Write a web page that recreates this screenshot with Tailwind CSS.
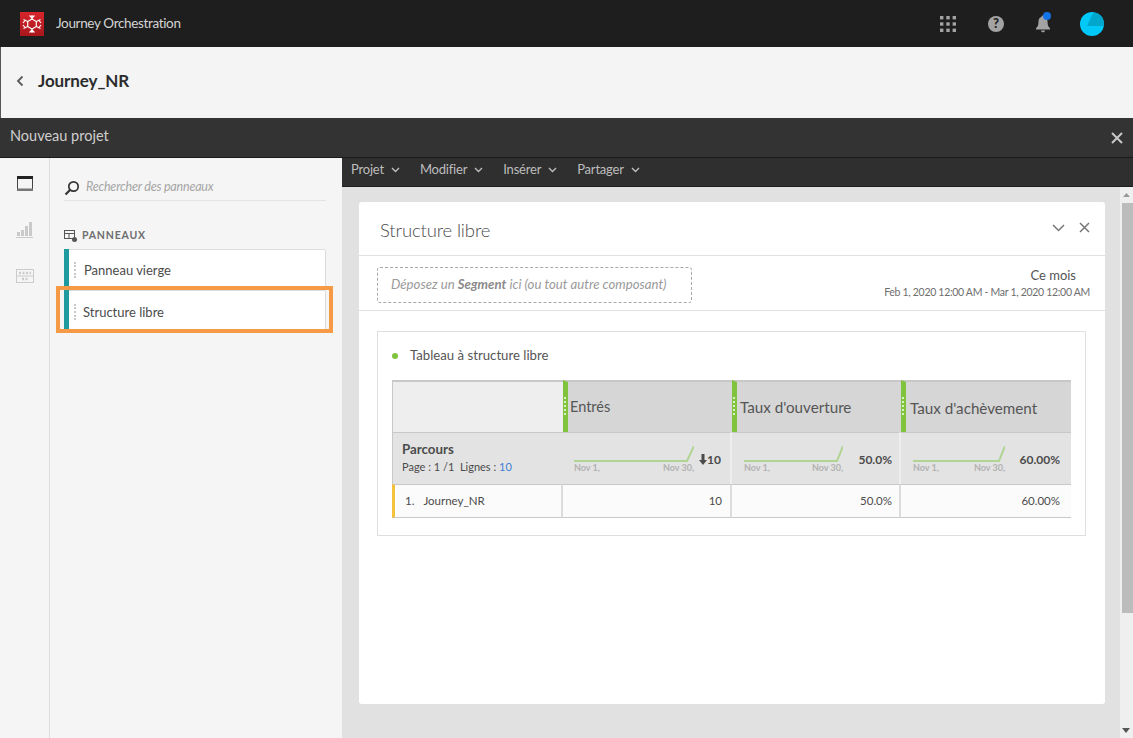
<!DOCTYPE html>
<html lang="fr"><head><meta charset="utf-8">
<script src="https://cdn.jsdelivr.net/npm/@tailwindcss/browser@4"></script>
</head>
<body class="w-[1133px] h-[738px] overflow-hidden bg-[#e1e1e1] font-['Lato','Noto_Sans',sans-serif] text-[#4b4b4b]">
<header class="h-[47px] bg-[#1e1e1e] flex items-center pl-5 pr-[29px]">
  <div class="w-6 h-6 bg-gradient-to-b from-[#d9252c] to-[#a8171d] flex items-center justify-center">
    <svg width="20" height="20" viewBox="0 0 20 20" fill="none" stroke="#fff" stroke-width="1.2"><path d="M10 5L14.3 7.5V12.5L10 15L5.7 12.5V7.5Z"/><path d="M10 1V5M10 15V19M1.5 5.5L5.7 7.5M18.5 5.5L14.3 7.5M1.5 14.5L5.7 12.5M18.5 14.5L14.3 12.5M7.5 1.5L10 4L12.5 1.5M7.5 18.5L10 16L12.5 18.5M1 9L3 6.5M19 9L17 6.5M1 11L3 13.5M19 11L17 13.5"/></svg>
  </div>
  <span class="ml-3 text-[13.5px] text-[#d4d4d4] tracking-[-0.35px]">Journey Orchestration</span>
  <div class="ml-auto flex items-center">
    <svg width="16" height="16" viewBox="0 0 16 16" fill="#a3a3a3"><rect width="3.4" height="3.4" x="0" y="0"/><rect width="3.4" height="3.4" x="6.3" y="0"/><rect width="3.4" height="3.4" x="12.6" y="0"/><rect width="3.4" height="3.4" x="0" y="6.3"/><rect width="3.4" height="3.4" x="6.3" y="6.3"/><rect width="3.4" height="3.4" x="12.6" y="6.3"/><rect width="3.4" height="3.4" x="0" y="12.6"/><rect width="3.4" height="3.4" x="6.3" y="12.6"/><rect width="3.4" height="3.4" x="12.6" y="12.6"/></svg>
    <div class="ml-[32px] w-4 h-4 rounded-full bg-[#a3a3a3] flex items-center justify-center text-[#1e1e1e] text-[13px] font-black leading-none">?</div>
    <div class="relative ml-[31px] w-4 h-5">
      <svg width="16" height="20" viewBox="0 0 16 20" fill="#a3a3a3"><path d="M8 1.5C9 1.5 9.6 2.2 9.6 3C12 3.8 12.6 6 12.6 8.5C12.6 11 13.2 12.6 15 14.3V15.5H1V14.3C2.8 12.6 3.4 11 3.4 8.5C3.4 6 4 3.8 6.4 3C6.4 2.2 7 1.5 8 1.5Z"/><path d="M6 16.5H10C10 18.9 6 18.9 6 16.5Z"/></svg>
      <span class="absolute -top-0.5 left-2 w-2 h-2 rounded-full bg-[#1473e6]"></span>
    </div>
    <div class="ml-[29px] w-6 h-6 rounded-full bg-[#00c8f8] relative overflow-hidden">
      <svg width="24" height="24" viewBox="0 0 24 24" class="absolute inset-0"><path d="M7 14L13 1H24V14Z" fill="#00a6cc"/></svg>
    </div>
  </div>
</header>
<div class="h-[71px] bg-[#f4f4f4] border-l border-l-[#555] flex items-center pl-[15px] pb-[4px]">
  <svg width="8" height="12" viewBox="0 0 8 12" fill="none" stroke="#5a5a5a" stroke-width="1.8"><path d="M6.5 1.5L2 6L6.5 10.5"/></svg>
  <span class="ml-[14px] text-[17px] font-bold text-[#2c2c2c] tracking-[-0.1px]">Journey_NR</span>
</div>
<div class="h-10 bg-[#333333] border-b border-b-[#1a1a1a] flex items-center justify-between pl-2.5 pr-[10px]">
  <span class="text-[14.5px] text-[#cfcfcf] -mt-1">Nouveau projet</span>
  <svg width="12" height="12" viewBox="0 0 12 12" fill="none" stroke="#c8c8c8" stroke-width="2"><path d="M1 1L11 11M11 1L1 11"/></svg>
</div>
<div class="flex h-[580px]">
  <nav class="w-[50px] bg-[#f5f5f5] border-r border-r-[#dedede] flex flex-col items-center shrink-0 pt-[18px]">
    <svg width="16" height="15" viewBox="0 0 16 15" fill="none"><rect x="0.5" y="0.5" width="15" height="14" stroke="#444"/><rect x="0" y="0" width="16" height="3" fill="#222"/><rect x="0" y="12.5" width="16" height="2.5" fill="#777"/></svg>
    <svg class="mt-[31px]" width="17" height="16" viewBox="0 0 17 16" fill="#c9c9c9"><rect x="1" y="10" width="3" height="4"/><rect x="5" y="8" width="3" height="6"/><rect x="9" y="4" width="3" height="10"/><rect x="13" y="0" width="3" height="14"/><rect x="0" y="15" width="17" height="1"/></svg>
    <svg class="mt-[31px]" width="18" height="14" viewBox="0 0 18 14" fill="none" stroke="#cbcbcb"><rect x="0.5" y="0.5" width="17" height="13"/><path d="M0 7H18"/><path d="M3 4H15M6 10H13" stroke-width="2.4" stroke-dasharray="2 1.5"/></svg>
  </nav>
  <aside class="w-[292px] shrink-0 bg-[#f5f5f5] pl-3.5 pr-4 pt-[3px]">
    <div class="h-10 border-b border-b-[#e4e4e4] flex items-center pt-[14px]">
      <svg width="16" height="16" viewBox="0 0 16 16" fill="none" stroke="#333" stroke-width="1.7"><circle cx="9.5" cy="6.5" r="4.7"/><path d="M6 10L1.5 14.5" stroke-width="2.2"/></svg>
      <span class="ml-1.5 italic text-[12.5px] text-[#a5a5a5] tracking-[-0.2px]">Rechercher des panneaux</span>
    </div>
    <div class="mt-[27px] h-4 flex items-center">
      <svg width="14" height="14" viewBox="0 0 14 14" fill="none" stroke="#555"><rect x="0.5" y="1.5" width="10" height="8"/><path d="M0.5 4.5H10.5M5 4.5V9.5"/><circle cx="10.5" cy="10.5" r="2.5" fill="#555" stroke="none"/></svg>
      <span class="ml-1 text-[10.5px] font-bold tracking-[0.8px] text-[#6e6e6e]">PANNEAUX</span>
    </div>
    <ul class="mt-[5px] w-[262px] relative">
      <li class="h-[42px] bg-white border border-[#dcdcdc] border-l-0 rounded-r-[2px] flex items-center">
        <span class="w-[5px] h-[42px] bg-[#1f9a9e] shrink-0 -mt-px -mb-px"></span>
        <span class="ml-[5px] h-4 border-l-2 border-dotted border-l-[#c8c8c8]"></span>
        <span class="ml-[8px] pt-[2px] text-[13px] text-[#4b4b4b]">Panneau vierge</span>
      </li>
      <li class="h-[42px] bg-white border-b border-r border-[#dcdcdc] flex items-center relative">
        <span class="w-[5px] h-[42px] bg-[#1f9a9e] shrink-0"></span>
        <span class="ml-[5px] h-4 border-l-2 border-dotted border-l-[#c8c8c8]"></span>
        <span class="ml-[7px] pt-[2px] text-[13px] text-[#4b4b4b]">Structure libre</span>
        <span class="absolute left-[-8px] top-[-5px] w-[277px] h-[47px] border-4 border-[#f79a45]"></span>
      </li>
    </ul>
  </aside>
  <main class="flex-1 flex flex-col min-w-0">
    <div class="h-[29px] bg-[#2f2f2f] border-b border-b-[#1f1f1f] flex items-center pl-[9px] pb-[4px] gap-[20px] text-[13px] text-[#bdbdbd] tracking-[-0.2px]">
      <span class="flex items-center gap-[7px]">Projet <svg width="9" height="6" viewBox="0 0 9 6" fill="none" stroke="#bdbdbd" stroke-width="1.4"><path d="M1 1L4.5 4.5L8 1"/></svg></span>
      <span class="flex items-center gap-[7px]">Modifier <svg width="9" height="6" viewBox="0 0 9 6" fill="none" stroke="#bdbdbd" stroke-width="1.4"><path d="M1 1L4.5 4.5L8 1"/></svg></span>
      <span class="flex items-center gap-[7px]">Insérer <svg width="9" height="6" viewBox="0 0 9 6" fill="none" stroke="#bdbdbd" stroke-width="1.4"><path d="M1 1L4.5 4.5L8 1"/></svg></span>
      <span class="flex items-center gap-[7px]">Partager <svg width="9" height="6" viewBox="0 0 9 6" fill="none" stroke="#bdbdbd" stroke-width="1.4"><path d="M1 1L4.5 4.5L8 1"/></svg></span>
    </div>
    <div class="flex flex-1 min-h-0">
      <div class="flex-1 pl-[17px] pr-[15px] pt-[15px]">
        <section class="h-[502px] bg-white rounded-[3px] flex flex-col">
          <div class="h-[54px] border-b border-b-[#e1e1e1] flex items-center justify-between pl-[21px] pr-[15px] shrink-0">
            <h2 class="pt-[4px] text-[18.5px] font-light text-[#4b4b4b] tracking-[-0.15px]">Structure libre</h2>
            <div class="flex items-center gap-[14px] -mt-[2px]">
              <svg width="13" height="8" viewBox="0 0 13 8" fill="none" stroke="#777" stroke-width="1.5"><path d="M1 1L6.5 6.5L12 1"/></svg>
              <svg width="11" height="11" viewBox="0 0 11 11" fill="none" stroke="#777" stroke-width="1.5"><path d="M1 1L10 10M10 1L1 10"/></svg>
            </div>
          </div>
          <div class="h-[55px] border-b border-b-[#e1e1e1] flex items-center justify-between pl-[18px] pr-[15px] pt-[4px] shrink-0">
            <div class="w-[315px] h-9 border border-dashed border-[#a8a8a8] rounded-[3px] flex items-center pl-[13px] italic text-[13.2px] text-[#9a9a9a]">
              <span>Déposez un <b class="font-bold text-[#8a8a8a]">Segment</b> ici (ou tout autre composant)</span>
            </div>
            <div class="text-right -mt-[3px]">
              <div class="text-[13px] leading-4 text-[#555] pr-[14px]">Ce mois</div>
              <div class="mt-[2px] text-[10.5px] leading-[15px] text-[#6e6e6e] tracking-[-0.3px]">Feb 1, 2020 12:00 AM - Mar 1, 2020 12:00 AM</div>
            </div>
          </div>
          <div class="mt-[20px] mx-[18px] w-[709px] h-[205px] border border-[#dfdfdf] pl-[14px] pt-[14px]">
            <div class="h-[20px] flex items-center text-[13.2px] text-[#555]">
              <span class="w-[6px] h-[6px] rounded-full bg-[#7fc43c] mr-3"></span>Tableau à structure libre
            </div>
            <table class="mt-[14px] w-[679px] table-fixed border-separate border-spacing-0">
              <colgroup><col class="w-[171px]"><col class="w-[169px]"><col class="w-[169px]"><col class="w-[170px]"></colgroup>
              <tbody>
                <tr>
                  <td class="h-[52px] bg-[#eeeeee] border-t-2 border-t-[#c8c8c8] border-l border-l-[#c8c8c8]"></td>
                  <td class="h-[52px] relative bg-[#d6d6d6] border-t-2 border-t-[#c8c8c8] border-l-[5px] border-l-[#7fc43c] pl-[2px] text-[14.5px] text-[#555]"><span class="absolute -left-[4px] top-[15px] h-[18px] border-l-2 border-dotted border-l-[#d9efc4]"></span>Entrés</td>
                  <td class="h-[52px] relative bg-[#d6d6d6] border-t-2 border-t-[#c8c8c8] border-l-[5px] border-l-[#7fc43c] pl-[3px] text-[15.2px] text-[#555]"><span class="absolute -left-[4px] top-[15px] h-[18px] border-l-2 border-dotted border-l-[#d9efc4]"></span>Taux d'ouverture</td>
                  <td class="h-[52px] relative bg-[#d6d6d6] border-t-2 border-t-[#c8c8c8] border-l-[5px] border-l-[#7fc43c] pl-[4px] pt-[3px] text-[15.2px] text-[#555]"><span class="absolute -left-[4px] top-[15px] h-[18px] border-l-2 border-dotted border-l-[#d9efc4]"></span>Taux d'achèvement</td>
                </tr>
                <tr>
                  <td class="h-[52px] bg-[#e3e3e3] border-t border-t-[#c8c8c8] border-l border-l-[#c8c8c8] pl-[9px] pb-[2px]">
                    <div class="text-[13.3px] font-bold text-[#4b4b4b] leading-[17px]">Parcours</div>
                    <div class="text-[11px] text-[#4b4b4b] leading-[17px]">Page : 1 /1&nbsp; Lignes : <span class="text-[#3f7fd6]">10</span></div>
                  </td>
                  <td class="h-[52px] bg-[#e3e3e3] border-t border-t-[#c8c8c8] border-r-2 border-r-[#eeeeee]">
                    <div class="flex items-center pl-[11px] pr-[9px] pt-[2px]">
                      <div class="w-[120px]">
                        <svg class="block" width="120" height="16" viewBox="0 0 120 16" fill="none" stroke="#afd494" stroke-width="2"><path d="M0 15H113L120 0"/></svg>
                        <div class="flex justify-between text-[9px] font-bold text-[#b2b2b2] leading-[12px] w-[120px]"><span>Nov 1,</span><span>Nov 30,</span></div>
                      </div>
                      <span class="ml-auto flex items-center text-[12px] font-bold text-[#4b4b4b]"><svg width="8" height="11" viewBox="0 0 8 11" fill="#4b4b4b"><path d="M2.5 0H5.5V6H8L4 11L0 6H2.5Z"/></svg>10</span>
                    </div>
                  </td>
                  <td class="h-[52px] bg-[#e3e3e3] border-t border-t-[#c8c8c8] border-r-2 border-r-[#eeeeee]">
                    <div class="flex items-center pl-[12px] pr-[7px] pt-[2px]">
                      <div class="w-[99px]">
                        <svg class="block" width="99" height="16" viewBox="0 0 99 16" fill="none" stroke="#afd494" stroke-width="2"><path d="M0 15H93L99 0"/></svg>
                        <div class="flex justify-between text-[9px] font-bold text-[#b2b2b2] leading-[12px]"><span>Nov 1,</span><span>Nov 30,</span></div>
                      </div>
                      <span class="ml-auto text-[12px] font-bold text-[#4b4b4b]">50.0%</span>
                    </div>
                  </td>
                  <td class="h-[52px] bg-[#e3e3e3] border-t border-t-[#c8c8c8]">
                    <div class="flex items-center pl-[12px] pr-[11px] pt-[2px]">
                      <div class="w-[92px]">
                        <svg class="block" width="92" height="16" viewBox="0 0 92 16" fill="none" stroke="#afd494" stroke-width="2"><path d="M0 15H86L92 0"/></svg>
                        <div class="flex justify-between text-[9px] font-bold text-[#b2b2b2] leading-[12px]"><span>Nov 1,</span><span>Nov 30,</span></div>
                      </div>
                      <span class="ml-auto text-[12px] font-bold text-[#4b4b4b]">60.00%</span>
                    </div>
                  </td>
                </tr>
                <tr>
                  <td class="h-[34px] bg-[#fbfbfb] border-y border-y-[#c8c8c8] border-l-[3px] border-l-[#f5c33b] border-r-2 border-r-[#dcdcdc] pl-[10px] text-[11.5px] text-[#4b4b4b]"><span class="mr-[9px]">1.</span>Journey_NR</td>
                  <td class="h-[34px] bg-[#fbfbfb] border-y border-y-[#c8c8c8] border-r-2 border-r-[#dcdcdc] pr-[8px] text-right text-[11.5px]">10</td>
                  <td class="h-[34px] bg-[#fbfbfb] border-y border-y-[#c8c8c8] border-r-2 border-r-[#dcdcdc] pr-[7px] text-right text-[11.5px]">50.0%</td>
                  <td class="h-[34px] bg-[#fbfbfb] border-y border-y-[#c8c8c8] pr-[11px] text-right text-[11.5px]">60.00%</td>
                </tr>
              </tbody>
            </table>
          </div>
        </section>
      </div>
      <div class="w-[13px] bg-[#efefef] shrink-0 flex flex-col items-end relative">
        <div class="h-[16px] w-full flex items-start justify-center pt-[6px]"><svg width="7" height="4" viewBox="0 0 7 4" fill="#9a9a9a"><path d="M3.5 0L7 4H0Z"/></svg></div>
        <div class="h-[410px] w-[11px] bg-[#bcbcbc]"></div>
        <svg class="absolute bottom-[5px] left-[2px]" width="8" height="5" viewBox="0 0 8 5" fill="#555"><path d="M0 0H8L4 5Z"/></svg>
      </div>
    </div>
  </main>
</div>
</body></html>
